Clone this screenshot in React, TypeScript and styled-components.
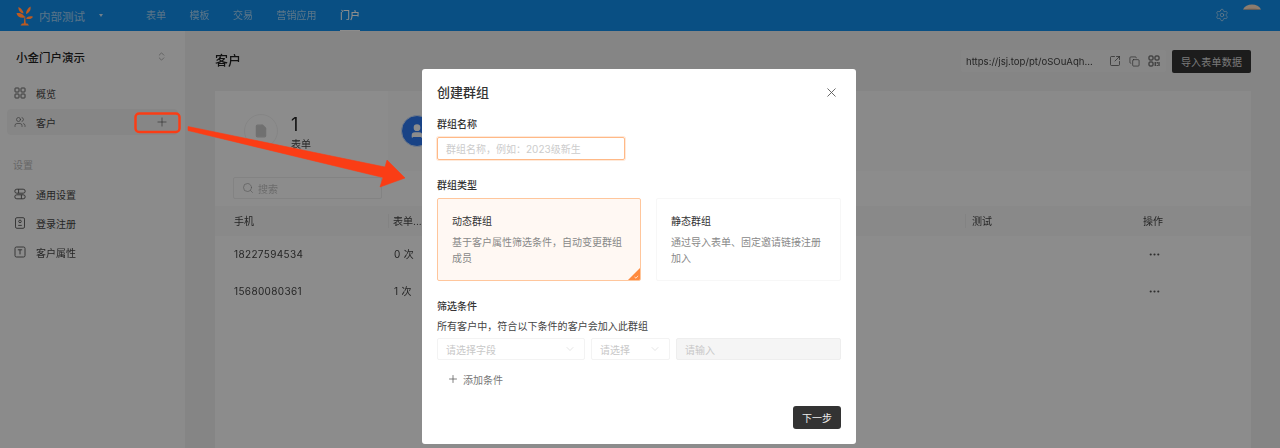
import React, { FC, ReactNode } from 'react';
import styled, { createGlobalStyle } from 'styled-components';
import {
  ChevronDown,
  ChevronsUpDown,
  Copy,
  Ellipsis,
  File,
  Plus,
  Search,
  Settings,
  SquareArrowOutUpRight,
  User,
  Users,
  X,
} from 'lucide-react';

const FONT = 'Inter, "Noto Sans CJK SC", "Noto Sans", sans-serif';

const GlobalStyle = createGlobalStyle`
  html, body {
    margin: 0;
    height: 100%;
    overflow: hidden;
    background: #f2f2f2;
  }
  * { box-sizing: border-box; }
  body {
    font-family: ${FONT};
    font-size: 10px;
    color: #333;
  }
`;

const Page = styled.div`
  position: relative;
  width: 1280px;
  height: 448px;
  overflow: hidden;
  display: flex;
  flex-direction: column;
  filter: blur(0.35px);
`;

const Header = styled.header`
  height: 31px;
  flex: none;
  display: flex;
  align-items: center;
  background: #1190ee;
  padding-left: 15px;
`;

const Brand = styled.div`
  display: flex;
  align-items: center;
  width: 131px;
  color: rgba(255, 255, 255, 0.62);
  font-size: 11.5px;
  gap: 5px;
`;

const Caret = styled.span`
  width: 0;
  height: 0;
  margin-left: 9px;
  border-left: 2.5px solid transparent;
  border-right: 2.5px solid transparent;
  border-top: 3px solid rgba(255, 255, 255, 0.8);
`;

const Nav = styled.nav`
  display: flex;
  height: 100%;
  gap: 23.5px;
  flex: 1;
`;

const NavItem = styled.div<{ $active?: boolean }>`
  position: relative;
  display: flex;
  align-items: center;
  height: 100%;
  font-size: 10px;
  padding-bottom: 1px;
  font-weight: ${(p) => (p.$active ? 500 : 400)};
  color: ${(p) => (p.$active ? '#fff' : 'rgba(255, 255, 255, 0.62)')};
  border-bottom: 1px solid ${(p) => (p.$active ? '#fff' : 'transparent')};
`;

const HeaderRight = styled.div`
  display: flex;
  align-items: flex-start;
  height: 100%;
  padding-right: 19px;
  gap: 14px;
  color: rgba(255, 255, 255, 0.75);
`;

const GearWrap = styled.div`
  padding-top: 8px;
  display: flex;
`;

const LogoMark = styled.svg`
  position: relative;
  z-index: 1;
`;

const Content = styled.div`
  flex: 1;
  display: flex;
  min-height: 0;
`;

const Sidebar = styled.aside`
  width: 185px;
  flex: none;
  background: #fefefe;
  padding: 0 7px;
`;

const SidebarHead = styled.div`
  height: 49px;
  padding: 2px 11px 0 9px;
  display: flex;
  align-items: center;
  justify-content: space-between;
  font-size: 11.5px;
  font-weight: 500;
  color: #222;
`;

const SideItem = styled.div<{ $active?: boolean }>`
  height: 26px;
  margin-bottom: 3px;
  padding: 0 6px 0 7px;
  display: flex;
  align-items: center;
  gap: 10px;
  border-radius: 4px;
  color: #444;
  background: ${(p) => (p.$active ? '#f5f5f5' : 'transparent')};
`;

const SideItemPlus = styled.span`
  margin-left: auto;
  margin-right: 3px;
  margin-top: -1px;
  display: flex;
`;

const SideLabel = styled.div`
  height: 17px;
  line-height: 17px;
  margin: 22px 0 7px;
  padding-left: 6px;
  color: #bbb;
`;

const Main = styled.main`
  flex: 1;
  padding: 0 29px 0 30px;
  min-width: 0;
`;

const MainHead = styled.div`
  height: 60px;
  display: flex;
  align-items: center;
  justify-content: space-between;
`;

const PageTitle = styled.h1`
  margin: 0 0 3px;
  font-size: 13px;
  font-weight: 500;
  color: #222;
`;

const HeadTools = styled.div`
  display: flex;
  align-items: center;
  gap: 6px;
`;

const UrlBox = styled.div`
  width: 205px;
  height: 22px;
  padding: 0 6px 0 5px;
  display: flex;
  align-items: center;
  justify-content: space-between;
  background: #f6f6f6;
  border-radius: 2px;
  color: #444;
`;

const UrlText = styled.span`
  font-size: 9.6px;
  width: 130px;
  white-space: nowrap;
`;

const UrlIcons = styled.div`
  display: flex;
  align-items: center;
  gap: 8px;
`;

const ImportButton = styled.button`
  width: 79px;
  height: 23px;
  border: 0;
  border-radius: 2px;
  background: #333;
  color: #ddd;
  font: inherit;
  font-size: 10px;
  letter-spacing: 0.2px;
  padding: 0;
`;

const Card = styled.section`
  background: #fff;
  height: 357px;
`;

const StatRow = styled.div`
  height: 80px;
  display: grid;
  grid-template-columns: 173px 1fr;
`;

const StatTile = styled.div<{ $shaded?: boolean }>`
  display: flex;
  align-items: center;
  padding-left: ${(p) => (p.$shaded ? 13 : 29)}px;
  gap: 13px;
  background: ${(p) => (p.$shaded ? '#fcfcfc' : 'transparent')};
`;

const StatCircle = styled.div<{ $blue?: boolean }>`
  width: ${(p) => (p.$blue ? 32 : 34)}px;
  height: ${(p) => (p.$blue ? 32 : 34)}px;
  border-radius: 50%;
  display: flex;
  align-items: center;
  justify-content: center;
  background: ${(p) => (p.$blue ? '#2f7bf5' : '#fff')};
  border: 1px solid ${(p) => (p.$blue ? '#cfe0fb' : '#f2f2f2')};
  box-shadow: ${(p) => (p.$blue ? '0 0 0 1px #2f7bf5 inset' : 'none')};
`;

const StatText = styled.div`
  margin-top: 4px;
`;

const StatValue = styled.div`
  font-size: 18px;
  line-height: 22px;
  color: #222;
`;

const StatLabel = styled.div`
  line-height: 16px;
  margin-top: 0;
  color: #444;
`;

const SearchRow = styled.div`
  height: 35px;
  padding: 6px 0 0 18px;
`;

const SearchBox = styled.div`
  width: 149px;
  height: 22px;
  padding: 0 8px;
  display: flex;
  align-items: center;
  gap: 4px;
  border: 1px solid #eee;
  border-radius: 2px;
  color: #c4c4c4;
`;

const TableRow = styled.div<{ $head?: boolean }>`
  display: grid;
  grid-template-columns: 173px 577px 159px 127px;
  height: ${(p) => (p.$head ? 30 : 37)}px;
  align-items: center;
  background: ${(p) => (p.$head ? '#f9f9f9' : 'transparent')};
  color: #444;
`;

const Cell = styled.div<{ $pad?: number; $divider?: boolean }>`
  padding-left: ${(p) => p.$pad ?? 18}px;
  line-height: 14px;
  border-left: 1px solid ${(p) => (p.$divider ? '#eee' : 'transparent')};
`;

const ValueCell = styled(Cell)`
  letter-spacing: 0.35px;
  margin-top: -2px;
`;

const DotsCell = styled.div`
  padding-left: 24px;
  display: flex;
`;

const Scrim = styled.div`
  position: absolute;
  inset: 0;
  background: rgba(0, 0, 0, 0.45);
`;

const Annotation = styled.svg`
  position: absolute;
  left: 0;
  top: 0;
`;

const Modal = styled.div`
  position: absolute;
  left: 422px;
  top: 69px;
  width: 434px;
  height: 375px;
  padding: 15px;
  background: #fff;
  border-radius: 3px;
`;

const ModalHead = styled.div`
  height: 18px;
  display: flex;
  align-items: center;
  justify-content: space-between;
  color: #555;
`;

const ModalTitle = styled.h2`
  margin: 0 0 3px;
  font-size: 13px;
  font-weight: 500;
  color: #333;
`;

const CloseIcon = styled(X)`
  margin: -2px 2px 0 0;
`;

const FieldLabel = styled.div<{ $top: number }>`
  margin-top: ${(p) => p.$top}px;
  margin-bottom: 6px;
  height: 14px;
  line-height: 14px;
  font-weight: 500;
  color: #333;
`;

const NameInput = styled.div`
  width: 188px;
  height: 23px;
  padding-left: 8px;
  display: flex;
  align-items: center;
  border: 1px solid #ffb987;
  border-radius: 2px;
  box-shadow: 0 0 0 1px #ffe9d9;
  color: #ccc;
`;

const TypeGrid = styled.div`
  display: grid;
  grid-template-columns: 204px 185px;
  gap: 15px;
`;

const TypeCard = styled.div<{ $active?: boolean }>`
  position: relative;
  height: 83px;
  padding: 15px 14px 0;
  border: 1px solid ${(p) => (p.$active ? '#ffc69c' : '#f7f7f7')};
  border-radius: 2px;
  background: ${(p) => (p.$active ? '#fff8f3' : '#fff')};
  overflow: hidden;
`;

const TypeTitle = styled.div`
  height: 14px;
  line-height: 14px;
  color: #333;
`;

const TypeDesc = styled.div`
  margin-top: 6px;
  line-height: 16px;
  color: #888;
`;

const CornerMark = styled.svg`
  position: absolute;
  right: 0;
  bottom: 0;
`;

const Hint = styled.div`
  height: 14px;
  line-height: 14px;
  margin-top: 1px;
  margin-bottom: 5px;
  letter-spacing: 0.05px;
  color: #444;
`;

const ConditionRow = styled.div`
  display: grid;
  grid-template-columns: 148px 79px 1fr;
  gap: 6px;
`;

const SelectBox = styled.div<{ $disabled?: boolean }>`
  height: 22px;
  padding: 0 8px;
  display: flex;
  align-items: center;
  justify-content: space-between;
  border: 1px solid ${(p) => (p.$disabled ? '#eee' : '#f3f3f3')};
  border-radius: 2px;
  background: ${(p) => (p.$disabled ? '#f5f5f5' : '#fff')};
  color: #c8c8c8;
`;

const AddCondition = styled.div`
  margin-top: 12px;
  height: 14px;
  padding-left: 10px;
  display: flex;
  align-items: center;
  gap: 4px;
  color: #777;
`;

const ModalFoot = styled.div`
  margin-top: 20px;
  display: flex;
  justify-content: flex-end;
`;

const NextButton = styled.button`
  width: 48px;
  height: 23px;
  padding: 0;
  border: 0;
  border-radius: 3px;
  background: #333;
  color: #eee;
  font: inherit;
  font-size: 10px;
`;

const GridIcon: FC = () => (
  <svg width="12" height="12" viewBox="0 0 12 12" fill="none" stroke="#555" strokeWidth="0.9">
    <rect x="1" y="1" width="4" height="4" rx="0.6" />
    <rect x="7" y="1" width="4" height="4" rx="0.6" />
    <rect x="1" y="7" width="4" height="4" rx="0.6" />
    <rect x="7" y="7" width="4" height="4" rx="0.6" />
  </svg>
);

const QrIcon: FC = () => (
  <svg width="12" height="12" viewBox="0 0 12 12" fill="none" stroke="#444" strokeWidth="1">
    <rect x="1" y="1" width="4" height="4" rx="0.8" />
    <rect x="7" y="1" width="4" height="4" rx="0.8" />
    <rect x="1" y="7" width="4" height="4" rx="0.8" />
    <path d="M7.200 7v4M9.200 7v1.600M9.200 10v1M11 7v4" />
  </svg>
);

const ToggleIcon: FC = () => (
  <svg width="12" height="12" viewBox="0 0 12 12" fill="none" stroke="#555" strokeWidth="0.9">
    <rect x="0.800" y="1.200" width="10.400" height="4" rx="2" />
    <rect x="0.800" y="6.800" width="10.400" height="4" rx="2" />
    <path d="M4.600 1.200v4M7.400 6.800v4" />
  </svg>
);

const BadgeIcon: FC = () => (
  <svg width="12" height="12" viewBox="0 0 12 12" fill="none" stroke="#555" strokeWidth="0.9">
    <rect x="1.500" y="0.700" width="9" height="10.600" rx="1.400" />
    <circle cx="6" cy="4.400" r="1.300" />
    <path d="M4.200 8.400h3.600" />
  </svg>
);

const TextIcon: FC = () => (
  <svg width="12" height="12" viewBox="0 0 12 12" fill="none" stroke="#555" strokeWidth="0.9">
    <rect x="1" y="1" width="10" height="10" rx="1.400" />
    <path d="M3.800 3.800h4.400M6 3.800v4.600" />
  </svg>
);

const Logo: FC = () => (
  <LogoMark width="19" height="20" viewBox="0 0 19 20" fill="#bd5a20">
    <path d="M8.800 18l.7-8h.6l.7 8z" />
    <path d="M5.500 19.500h8.500l-1.500-2h-5.500z" />
    <path d="M9.500 11.500C9 8.500 6 6.500 1.500 7c.6 3.400 3.800 5.500 8 4.500z" />
    <path d="M8.500 7.500C8.500 5 6.500 2.500 3.500 1 3 4.400 5.200 6.800 8.500 7.500z" />
    <path d="M11 8c0-3 1.400-5.500 4.500-7.500.7 3.300-1 6-4.500 7.500z" />
    <path d="M11 12.500c1.400-2 4-2.700 7-1.800-1.300 2.300-4 3-7 1.800z" />
  </LogoMark>
);

const Avatar: FC = () => (
  <svg width="18" height="10" viewBox="0 0 18 10">
    <path d="M0 9.500C1.500 6.200 5 4.500 9 4.500s7.500 1.700 9 5z" fill="#ffe2c8" />
    <path d="M0 9.500C2 8.600 16 8.600 18 9.500z" fill="#e0a070" />
  </svg>
);

const Annotations: FC = () => (
  <Annotation width="1280" height="448" viewBox="0 0 1280 448">
    <rect x="135.500" y="113.500" width="44" height="18.500" rx="3.500" fill="none" stroke="#fa3d15" strokeWidth="2.500" />
    <polygon
      points="188,126.500 385,167 387,160 405,178 380,187 383,177.500 188,130.500"
      fill="#fa3d15"
      strokeLinejoin="round"
      stroke="#fa3d15"
      strokeWidth="0.600"
    />
  </Annotation>
);

interface ISideRow {
  icon: ReactNode;
  label: string;
  active?: boolean;
  extra?: ReactNode;
}

const SideRow: FC<ISideRow> = ({ icon, label, active, extra }: ISideRow) => (
  <SideItem $active={active}>
    {icon}
    <span>{label}</span>
    {extra}
  </SideItem>
);

const customers = [
  { phone: '18227594534', count: '0 次' },
  { phone: '15680080361', count: '1 次' },
];

const App: FC = () => (
  <Page>
    <GlobalStyle />
    <Header>
      <Brand>
        <Logo />
        <span>内部测试</span>
        <Caret />
      </Brand>
      <Nav>
        <NavItem>表单</NavItem>
        <NavItem>模板</NavItem>
        <NavItem>交易</NavItem>
        <NavItem>营销应用</NavItem>
        <NavItem $active>门户</NavItem>
      </Nav>
      <HeaderRight>
        <GearWrap>
          <Settings size={14} strokeWidth={1.200} />
        </GearWrap>
        <Avatar />
      </HeaderRight>
    </Header>
    <Content>
      <Sidebar>
        <SidebarHead>
          <span>小金门户演示</span>
          <ChevronsUpDown size={11} strokeWidth={1.200} color="#777" />
        </SidebarHead>
        <SideRow icon={<GridIcon />} label="概览" />
        <SideRow
          icon={<Users size={12} strokeWidth={1.200} color="#555" />}
          label="客户"
          active
          extra={(
            <SideItemPlus>
              <Plus size={14} strokeWidth={1} color="#444" />
            </SideItemPlus>
          )}
        />
        <SideLabel>设置</SideLabel>
        <SideRow icon={<ToggleIcon />} label="通用设置" />
        <SideRow icon={<BadgeIcon />} label="登录注册" />
        <SideRow icon={<TextIcon />} label="客户属性" />
      </Sidebar>
      <Main>
        <MainHead>
          <PageTitle>客户</PageTitle>
          <HeadTools>
            <UrlBox>
              <UrlText>https://jsj.top/pt/oSOuAqh...</UrlText>
              <UrlIcons>
                <SquareArrowOutUpRight size={12} strokeWidth={1.400} color="#444" />
                <Copy size={11} strokeWidth={1.400} color="#444" />
                <QrIcon />
              </UrlIcons>
            </UrlBox>
            <ImportButton>导入表单数据</ImportButton>
          </HeadTools>
        </MainHead>
        <Card>
          <StatRow>
            <StatTile>
              <StatCircle>
                <File size={14} color="#ccc" fill="#ccc" />
              </StatCircle>
              <StatText>
                <StatValue>1</StatValue>
                <StatLabel>表单</StatLabel>
              </StatText>
            </StatTile>
            <StatTile $shaded>
              <StatCircle $blue>
                <User size={16} color="#fff" fill="#fff" />
              </StatCircle>
            </StatTile>
          </StatRow>
          <SearchRow>
            <SearchBox>
              <Search size={12} strokeWidth={1.200} color="#999" />
              <span>搜索</span>
            </SearchBox>
          </SearchRow>
          <TableRow $head>
            <Cell>手机</Cell>
            <Cell $pad={4} $divider>表单...</Cell>
            <Cell $pad={6} $divider>测试</Cell>
            <Cell>操作</Cell>
          </TableRow>
          {customers.map((c) => (
            <TableRow key={c.phone}>
              <ValueCell>{c.phone}</ValueCell>
              <ValueCell $pad={5}>{c.count}</ValueCell>
              <Cell />
              <DotsCell>
                <Ellipsis size={13} strokeWidth={2} color="#555" />
              </DotsCell>
            </TableRow>
          ))}
        </Card>
      </Main>
    </Content>
    <Scrim />
    <Annotations />
    <Modal>
      <ModalHead>
        <ModalTitle>创建群组</ModalTitle>
        <CloseIcon size={15} strokeWidth={1.400} />
      </ModalHead>
      <FieldLabel $top={15}>群组名称</FieldLabel>
      <NameInput>群组名称，例如：2023级新生</NameInput>
      <FieldLabel $top={18}>群组类型</FieldLabel>
      <TypeGrid>
        <TypeCard $active>
          <TypeTitle>动态群组</TypeTitle>
          <TypeDesc>基于客户属性筛选条件，自动变更群组成员</TypeDesc>
          <CornerMark width="12" height="12" viewBox="0 0 12 12">
            <polygon points="12,0 12,12 0,12" fill="#ff8a3d" />
            <path d="M6.500 9l1.500 1.200 2-2.400" fill="none" stroke="#fff" strokeWidth="0.700" />
          </CornerMark>
        </TypeCard>
        <TypeCard>
          <TypeTitle>静态群组</TypeTitle>
          <TypeDesc>通过导入表单、固定邀请链接注册加入</TypeDesc>
        </TypeCard>
      </TypeGrid>
      <FieldLabel $top={18}>筛选条件</FieldLabel>
      <Hint>所有客户中，符合以下条件的客户会加入此群组</Hint>
      <ConditionRow>
        <SelectBox>
          <span>请选择字段</span>
          <ChevronDown size={12} strokeWidth={1} />
        </SelectBox>
        <SelectBox>
          <span>请选择</span>
          <ChevronDown size={12} strokeWidth={1} />
        </SelectBox>
        <SelectBox $disabled>请输入</SelectBox>
      </ConditionRow>
      <AddCondition>
        <Plus size={12} strokeWidth={1.500} color="#555" />
        <span>添加条件</span>
      </AddCondition>
      <ModalFoot>
        <NextButton>下一步</NextButton>
      </ModalFoot>
    </Modal>
  </Page>
);

export default App;
